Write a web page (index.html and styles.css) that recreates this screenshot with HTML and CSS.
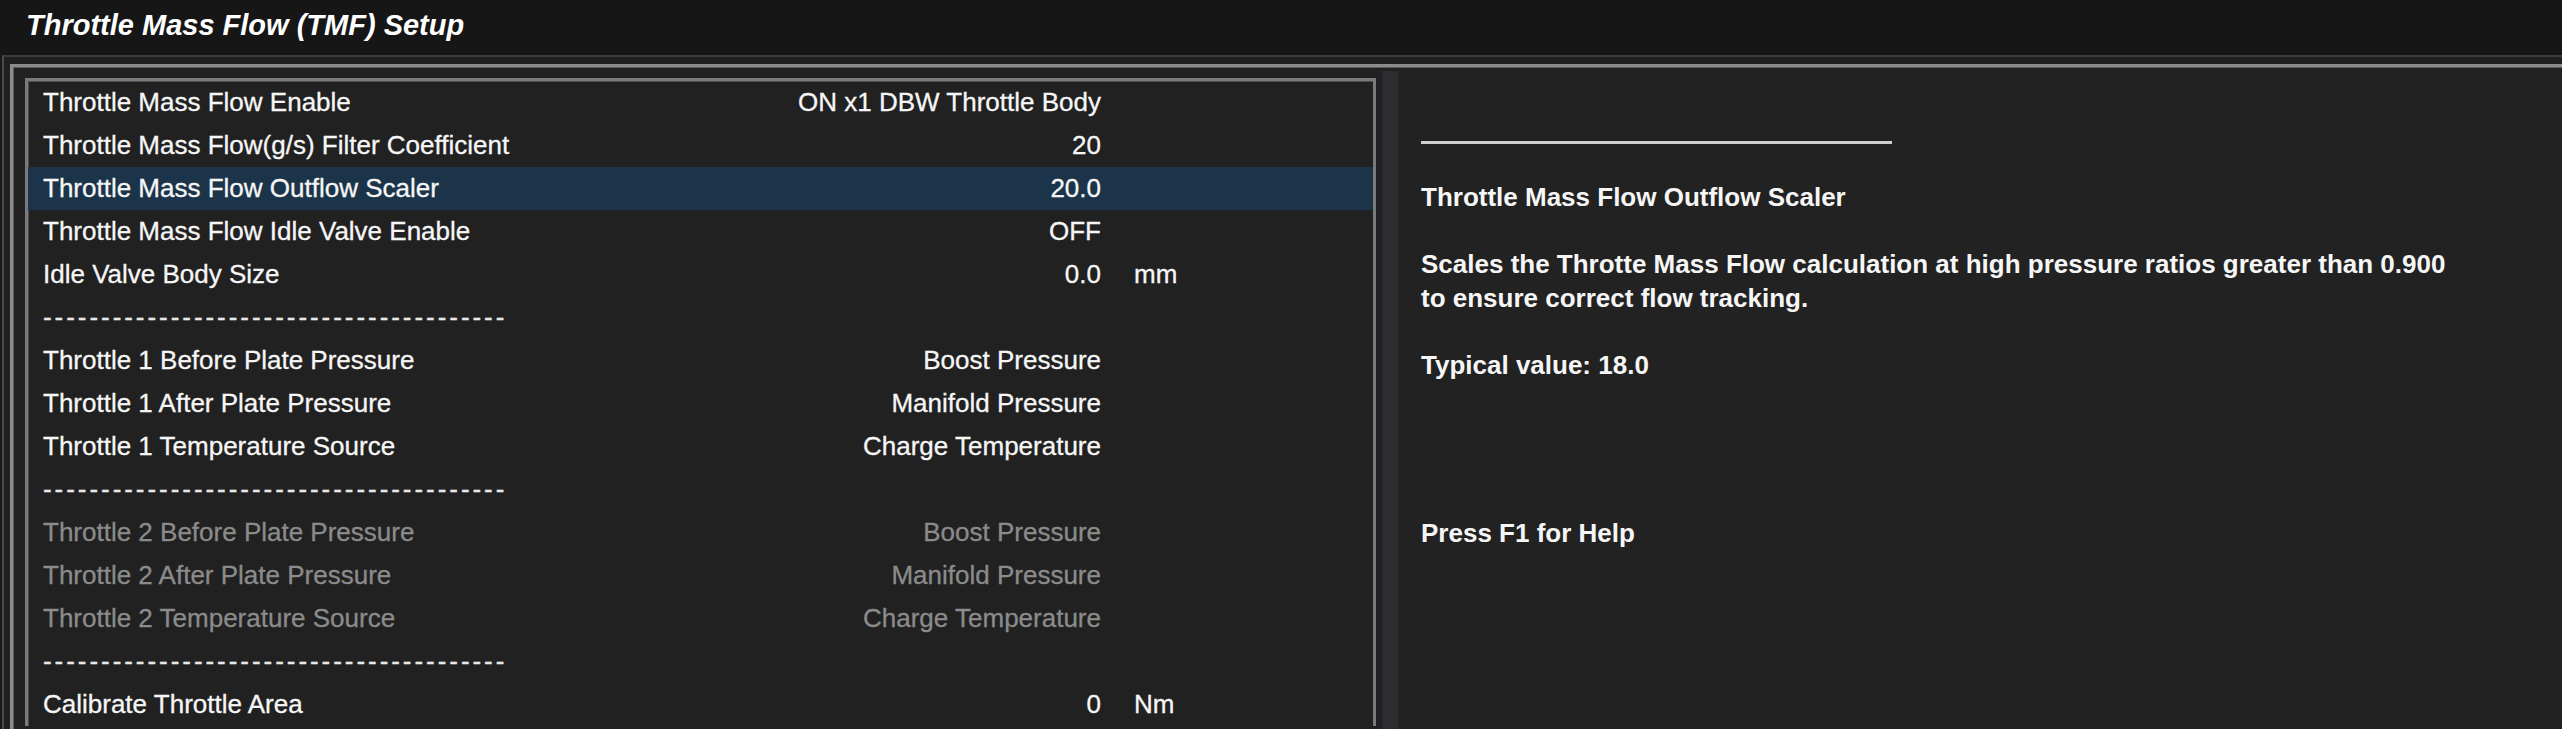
FILE: index.html
```html
<!DOCTYPE html>
<html lang="en">
<head>
<meta charset="utf-8">
<title>Throttle Mass Flow (TMF) Setup</title>
<link rel="stylesheet" href="styles.css">
</head>
<body>
<header class="titlebar">
  <h1 class="title">Throttle Mass Flow (TMF) Setup</h1>
</header>
<main class="workspace">
  <div class="frame">
    <section class="list">
      <div class="row"><span class="label">Throttle Mass Flow Enable</span><span class="value">ON x1 DBW Throttle Body</span><span class="unit"></span></div>
      <div class="row"><span class="label">Throttle Mass Flow(g/s) Filter Coefficient</span><span class="value">20</span><span class="unit"></span></div>
      <div class="row selected"><span class="label">Throttle Mass Flow Outflow Scaler</span><span class="value">20.0</span><span class="unit"></span></div>
      <div class="row"><span class="label">Throttle Mass Flow Idle Valve Enable</span><span class="value">OFF</span><span class="unit"></span></div>
      <div class="row"><span class="label">Idle Valve Body Size</span><span class="value">0.0</span><span class="unit">mm</span></div>
      <div class="row sep"><span class="dashes">----------------------------------------</span></div>
      <div class="row"><span class="label">Throttle 1 Before Plate Pressure</span><span class="value">Boost Pressure</span><span class="unit"></span></div>
      <div class="row"><span class="label">Throttle 1 After Plate Pressure</span><span class="value">Manifold Pressure</span><span class="unit"></span></div>
      <div class="row"><span class="label">Throttle 1 Temperature Source</span><span class="value">Charge Temperature</span><span class="unit"></span></div>
      <div class="row sep"><span class="dashes">----------------------------------------</span></div>
      <div class="row disabled"><span class="label">Throttle 2 Before Plate Pressure</span><span class="value">Boost Pressure</span><span class="unit"></span></div>
      <div class="row disabled"><span class="label">Throttle 2 After Plate Pressure</span><span class="value">Manifold Pressure</span><span class="unit"></span></div>
      <div class="row disabled"><span class="label">Throttle 2 Temperature Source</span><span class="value">Charge Temperature</span><span class="unit"></span></div>
      <div class="row sep"><span class="dashes">----------------------------------------</span></div>
      <div class="row"><span class="label">Calibrate Throttle Area</span><span class="value">0</span><span class="unit">Nm</span></div>
    </section>
    <div class="splitter"></div>
    <aside class="help">
      <hr class="help-rule">
      <p class="help-title">Throttle Mass Flow Outflow Scaler</p>
      <p class="help-desc">Scales the Throtte Mass Flow calculation at high pressure ratios greater than 0.900<br>to ensure correct flow tracking.</p>
      <p class="help-typical">Typical value: 18.0</p>
      <p class="help-f1">Press F1 for Help</p>
    </aside>
  </div>
</main>
</body>
</html>
```
FILE: styles.css
```css
html, body {
  margin: 0;
  padding: 0;
  height: 100%;
  overflow: hidden;
}

body {
  background: #1a1a1a;
  color: #f2f2f2;
  font-family: "Liberation Sans", Arial, sans-serif;
  font-size: 26px;
  display: flex;
  flex-direction: column;
}

.titlebar {
  flex: none;
  height: 55px;
  background: #161616;
  display: flex;
  align-items: center;
  padding: 0 0 4px 26px;
  box-sizing: border-box;
}

.title {
  margin: 0;
  font-size: 29px;
  font-weight: bold;
  font-style: italic;
  color: #ffffff;
  line-height: 1;
}

.workspace {
  flex: 1;
  min-height: 0;
  display: flex;
  margin-left: 2px;
  border-left: 2px solid #4a4a4a;
  border-top: 2px solid #3c3c3c;
  padding: 7px 0 0 6px;
  background: #202020;
}

.frame {
  flex: 1;
  min-width: 0;
  display: flex;
  align-items: stretch;
  border-top: 3px solid #8c8c8c;
  border-left: 3px solid #8c8c8c;
  box-shadow: inset 1px 1px 0 #5c5c5c;
  padding: 4px 0 0 12px;
  background: #212121;
}

.list {
  align-self: flex-start;
  width: 1345px;
  margin-top: 7px;
  border: 3px solid #7a7a7a;
  border-bottom: none;
  box-shadow: inset 1px 1px 0 #4e4e4e;
  background: #212121;
  flex: none;
  -webkit-text-stroke: 0.3px currentColor;
}

.row {
  height: 43px;
  display: grid;
  grid-template-columns: 520px 538px auto;
  align-items: center;
  padding-left: 15px;
  color: #f6f6f6;
  white-space: nowrap;
}

.row.selected {
  background: #1b344a;
}

.row.disabled {
  color: #8b8b8b;
}

.value {
  text-align: right;
}

.unit {
  padding-left: 33px;
}

.row.sep {
  display: block;
  line-height: 43px;
}

.dashes {
  letter-spacing: 2.95px;
  color: #e8e8e8;
}

.splitter {
  flex: none;
  width: 16px;
  margin-left: 6px;
  background: #2b2d31;
}

.help {
  flex: 1;
  padding: 70px 0 0 23px;
  background: #222222;
  font-weight: bold;
  line-height: 33.6px;
  color: #f6f6f6;
}

.help-rule {
  width: 471px;
  height: 3px;
  margin: 0;
  border: none;
  background: #cfcfcf;
}

.help p {
  margin: 0;
}

.help .help-title {
  margin-top: 37px;
}

.help .help-desc,
.help .help-typical {
  margin-top: 33.6px;
}

.help .help-f1 {
  margin-top: 134.4px;
}
```
